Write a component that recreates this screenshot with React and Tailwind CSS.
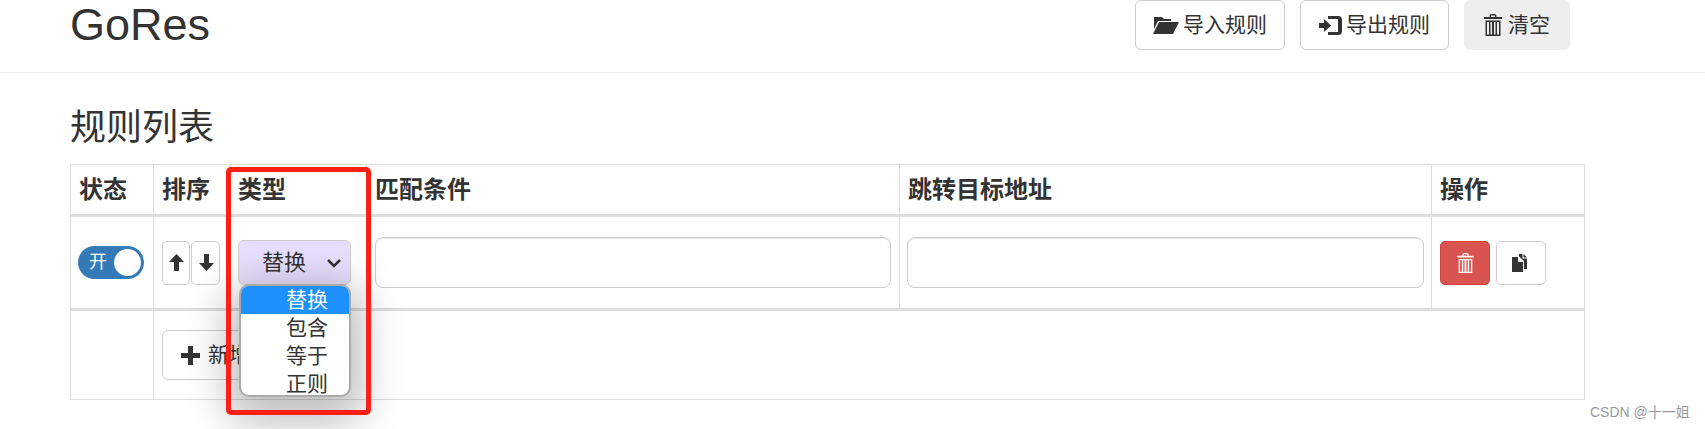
const Folder = () => (
  <svg width="26" height="19" viewBox="0 0 26 19" className="shrink-0 fill-[#333]">
    <path d="M1 1h8l2 2h7v2H5L1 13z" />
    <path d="M6 6h20l-6 12H0z" />
  </svg>
);

const LogIn = () => (
  <svg width="23" height="19" viewBox="0 0 23 19" className="shrink-0 fill-[#333]">
    <path d="M0 7h5V3l7 6.500-7 6.500v-4H0z" />
    <path d="M9 0h10a4 4 0 0 1 4 4v11a4 4 0 0 1-4 4H9v-3h10V3H9z" />
  </svg>
);

const Trash = ({ color, w = 18, h = 22 }) => (
  <svg width={w} height={h} viewBox="0 0 18 22" className="shrink-0" fill={color}>
    <path d="M5.500 3V2a2 2 0 0 1 2-2h3a2 2 0 0 1 2 2v1H18v2H0V3zM7 3h4V1.500H7z" fillRule="evenodd" />
    <path d="M1.500 6.500h15V22h-15zM3 8v12.500h2V8zm3.500 0v12.500h1.500V8zm3.500 0v12.500h1.500V8zm3 0v12.500h2V8z" fillRule="evenodd" />
  </svg>
);

const ArrowUp = () => (
  <svg width="15" height="17" viewBox="0 0 15 17" className="fill-[#333]">
    <path d="M7.500 0L15 8h-5v9H5V8H0z" />
  </svg>
);

const ArrowDown = () => (
  <svg width="15" height="17" viewBox="0 0 15 17" className="fill-[#333]">
    <path d="M5 0h5v9h5l-7.500 8L0 9h5z" />
  </svg>
);

const Plus = () => (
  <svg width="19" height="19" viewBox="0 0 19 19" className="shrink-0 fill-[#333]">
    <path d="M7 0h5v7h7v5h-7v7H7v-7H0V7h7z" />
  </svg>
);

const Duplicate = () => (
  <svg width="18" height="18" viewBox="0 0 18 18" className="fill-[#333]">
    <path d="M0 3h6v5h5v10H0z" />
    <path d="M7 0h3.500v4.500H15V15h-3V7L7 2.500zM11.500 0l3.500 3.500h-3.500z" />
  </svg>
);

const btn = "flex items-center justify-center gap-[4px] h-[50px] rounded-[6px] text-[21px] text-[#333]";
const cell = "border border-b-[3px] border-[#ddd] px-[8px]";

export default function App() {
  return (
    <div className="relative h-[429px] overflow-hidden bg-white font-['Liberation_Sans','Noto_Sans_CJK_SC',sans-serif] text-[#333]">
      <header className="flex h-[73px] justify-between border-b border-[#eee] pl-[70px] pr-[135px]">
        <h1 className="-mt-[3px] text-[45px] leading-[56px]">GoRes</h1>
        <div className="flex gap-[15px]">
          <button className={`${btn} w-[150px] border border-[#ccc]`}><Folder />导入规则</button>
          <button className={`${btn} w-[149px] border border-[#ccc]`}><LogIn />导出规则</button>
          <button className={`${btn} w-[106px] gap-[6px] bg-[#eee]`}><Trash color="#333" />清空</button>
        </div>
      </header>

      <main className="pl-[70px]">
        <h2 className="mt-[30px] h-[61px] text-[36px] leading-[50px]">规则列表</h2>
        <table className="w-[1515px] table-fixed border-collapse border border-[#ddd] text-[22px]">
          <thead>
            <tr className="h-[51px] text-left text-[24px] font-bold">
              <th className={`${cell} w-[83px]`}>状态</th>
              <th className={`${cell} w-[76px]`}>排序</th>
              <th className={`${cell} w-[137px]`}>类型</th>
              <th className={`${cell} w-[533px]`}>匹配条件</th>
              <th className={`${cell} w-[532px]`}>跳转目标地址</th>
              <th className={cell}>操作</th>
            </tr>
          </thead>
          <tbody>
            <tr className="h-[94px]">
              <td className="border border-b-[3px] border-[#ddd] px-[7px]">
                <div className="flex h-[33px] w-[66px] items-center justify-between rounded-full bg-[#337ab7] pl-[11px] pr-[3px] text-[18px] text-white">
                  开
                  <span className="h-[27px] w-[27px] rounded-full bg-white" />
                </div>
              </td>
              <td className={cell}>
                <div className="flex gap-px">
                  <button className="flex h-[44px] w-[28px] items-center justify-center rounded-[5px] border border-[#ccc] pl-[1px]"><ArrowUp /></button>
                  <button className="flex h-[44px] w-[29px] items-center justify-center rounded-[5px] border border-[#ccc] pl-[1px]"><ArrowDown /></button>
                </div>
              </td>
              <td className={cell}>
                <div className="flex h-[45px] w-[113px] items-center justify-between rounded-[6px] border border-[#ccc] bg-[#e6dffd] pl-[23px] pr-[8px]">
                  替换
                  <svg width="16" height="10" viewBox="0 0 16 10" fill="none" stroke="#333" strokeWidth="2.500"><path d="M2 2l6 6 6-6" /></svg>
                </div>
              </td>
              <td className={cell}>
                <input className="block h-[51px] w-full rounded-[8px] border border-[#ccc] shadow-[inset_0_1px_1px_rgba(0,0,0,0.075)]" />
              </td>
              <td className="border border-b-[3px] border-[#ddd] px-[7px]">
                <input className="block h-[51px] w-full rounded-[8px] border border-[#ccc] shadow-[inset_0_1px_1px_rgba(0,0,0,0.075)]" />
              </td>
              <td className={cell}>
                <div className="flex gap-[6px]">
                  <button className="flex h-[44px] w-[50px] items-center justify-center rounded-[5px] border border-[#d43f3a] bg-[#d9534f]"><Trash color="#fff" w={17} h={20} /></button>
                  <button className="flex h-[44px] w-[50px] items-center justify-center rounded-[5px] border border-[#ccc]"><Duplicate /></button>
                </div>
              </td>
            </tr>
            <tr className="h-[90px]">
              <td className="border border-[#ddd]" />
              <td colSpan={5} className="border border-[#ddd] px-[8px]">
                <button className={`${btn} w-[150px] justify-start gap-[8px] border border-[#ccc] pl-[18px]`}><Plus />新增</button>
              </td>
            </tr>
          </tbody>
        </table>
      </main>

      <div className="absolute left-[239px] top-[284px] h-[113px] w-[112px] overflow-hidden rounded-[10px] border-2 border-[#aaa] bg-white text-center text-[21px] leading-[28px] shadow-[0_14px_40px_12px_rgba(0,0,0,0.25)]">
        <div className="bg-[#1e90ff] pl-[24px] text-white">替换</div>
        <div className="pl-[24px]">包含</div>
        <div className="pl-[24px]">等于</div>
        <div className="pl-[24px]">正则</div>
      </div>

      <div className="pointer-events-none absolute left-[226px] top-[167px] h-[248px] w-[145px] rounded-[5px] border-[5px] border-[#ff2015]" />

      <span className="absolute left-[1590px] top-[402px] text-[14px] text-[#999]">CSDN @十一姐</span>
    </div>
  );
}
